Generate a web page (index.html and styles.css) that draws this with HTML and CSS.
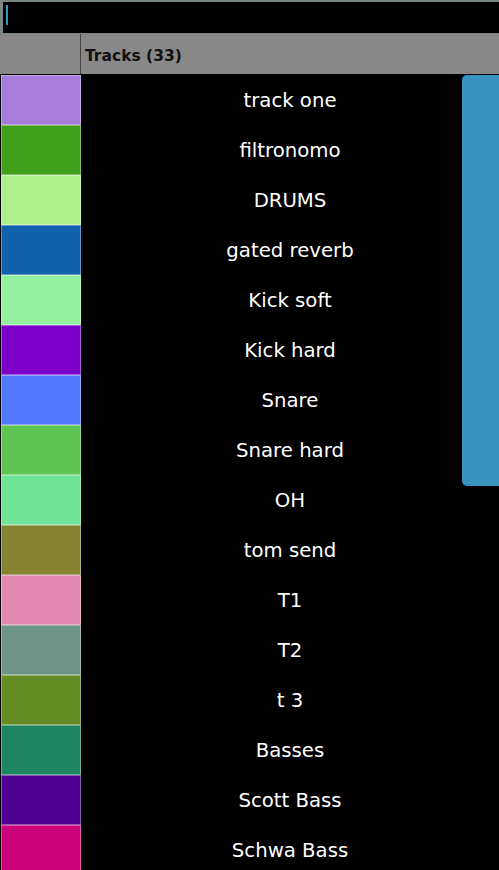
FILE: index.html
```html
<!DOCTYPE html>
<html lang="en">
<head>
    <meta charset="UTF-8">
    <title>Tracks</title>
    <link rel="stylesheet" href="styles.css">
</head>
<body>
    <div class="search"><span class="caret"></span></div>
    <div class="header">
        <div class="header-swatch"></div>
        <div class="header-title">Tracks (33)</div>
    </div>
    <div class="list">
        <div class="row"><div class="swatch c1"></div><div class="name">track one</div></div>
        <div class="row"><div class="swatch c2"></div><div class="name">filtronomo</div></div>
        <div class="row"><div class="swatch c3"></div><div class="name">DRUMS</div></div>
        <div class="row"><div class="swatch c4"></div><div class="name">gated reverb</div></div>
        <div class="row"><div class="swatch c5"></div><div class="name">Kick soft</div></div>
        <div class="row"><div class="swatch c6"></div><div class="name">Kick hard</div></div>
        <div class="row"><div class="swatch c7"></div><div class="name">Snare</div></div>
        <div class="row"><div class="swatch c8"></div><div class="name">Snare hard</div></div>
        <div class="row"><div class="swatch c9"></div><div class="name">OH</div></div>
        <div class="row"><div class="swatch c10"></div><div class="name">tom send</div></div>
        <div class="row"><div class="swatch c11"></div><div class="name">T1</div></div>
        <div class="row"><div class="swatch c12"></div><div class="name">T2</div></div>
        <div class="row"><div class="swatch c13"></div><div class="name">t 3</div></div>
        <div class="row"><div class="swatch c14"></div><div class="name">Basses</div></div>
        <div class="row"><div class="swatch c15"></div><div class="name">Scott Bass</div></div>
        <div class="row"><div class="swatch c16"></div><div class="name">Schwa Bass</div></div>
        <div class="scrollbar"></div>
    </div>
</body>
</html>
```

FILE: styles.css
```css
body {
    margin: 0;
    background: #000;
    font-family: 'DejaVu Sans', sans-serif;
    height: 870px;
    overflow: hidden;
}

.search {
    height: 28px;
    border-top: 2px solid #7a8686;
    border-left: 3px solid #7a8686;
    border-bottom: 1px solid #7a8686;
    background: #000;
    padding: 3px 0 0 3px;
    box-sizing: content-box;
}

.caret {
    display: block;
    width: 2px;
    height: 20px;
    background: #3a92c0;
}

.header {
    display: flex;
    height: 40px;
    background: #888;
    border-bottom: 1px solid #000;
}

.header-swatch {
    width: 80px;
    border-right: 1px solid #444;
}

.header-title {
    padding: 13px 0 0 4px;
    font-size: 15.5px;
    font-weight: bold;
    color: #111;
}

.list {
    position: relative;
}

.row {
    display: flex;
    height: 50px;
}

.swatch {
    width: 78px;
    height: 48px;
    margin-left: 1px;
    border: 1px solid rgba(255, 255, 255, 0.35);
}

.name {
    flex: 1;
    text-align: center;
    color: #fff;
    font-size: 19.7px;
    padding-top: 2px;
    line-height: 48px;
}

.scrollbar {
    position: absolute;
    top: 0;
    right: 0;
    width: 37px;
    height: 411px;
    background: #3a92c0;
    border-radius: 5px 0 0 5px;
}

.c1 { background: #a67ddb; }
.c2 { background: #40a01c; }
.c3 { background: #aef08c; }
.c4 { background: #1261ad; }
.c5 { background: #94f09c; }
.c6 { background: #7d00c8; }
.c7 { background: #5478ff; }
.c8 { background: #5ec454; }
.c9 { background: #70e496; }
.c10 { background: #848432; }
.c11 { background: #e088b0; }
.c12 { background: #6e9488; }
.c13 { background: #648c22; }
.c14 { background: #1f8462; }
.c15 { background: #4e0092; }
.c16 { background: #cc0078; }
```
